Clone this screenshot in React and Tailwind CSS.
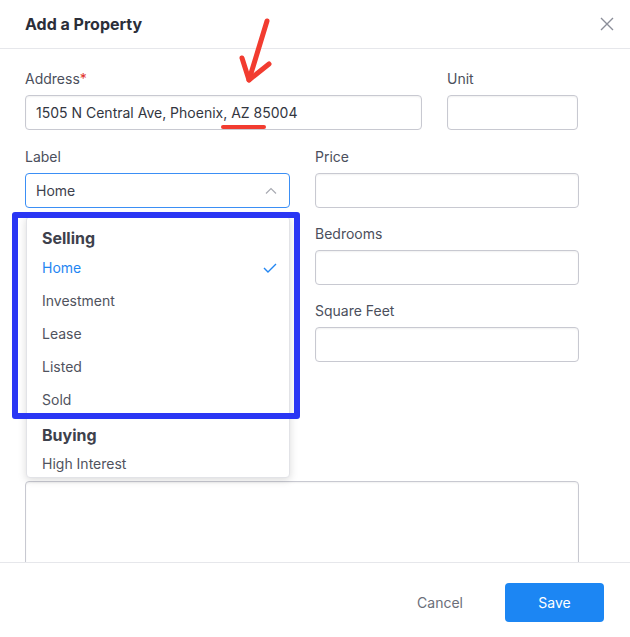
import { useState } from "react";

const font = { fontFamily: "Inter, 'Noto Sans', sans-serif" };

const inputCls =
  "block w-full h-[35px] rounded-[4px] border border-[#c8c9d1] bg-white px-[10px] text-[14px] text-[#33363f] shadow-[inset_0_1px_2px_rgba(0,0,0,0.06)] outline-none";

function Field({ label, required, children }) {
  return (
    <div>
      <div className="h-[20px] text-[14px] leading-[20px] text-[#4b4f5c]">
        {label}
        {required && <span className="text-[#e0342c]">*</span>}
      </div>
      <div className="mt-[6px]">{children}</div>
    </div>
  );
}

const selling = ["Home", "Investment", "Lease", "Listed", "Sold"];

function LabelSelect() {
  const [value] = useState("Home");
  return (
    <div className="relative">
      <div className="flex h-[35px] items-center justify-between rounded-[4px] border border-[#3b8ff5] bg-white pl-[10px] pr-[12px] text-[14px] text-[#3e424d]">
        <span>{value}</span>
        <svg width="12" height="8" viewBox="0 0 12 8" fill="none">
          <path d="M1 6.5 6 1.5l5 5" stroke="#a9abb3" strokeWidth="1.2" />
        </svg>
      </div>
      <div className="absolute left-[1px] top-[43px] z-10 h-[262px] w-[264px] overflow-hidden rounded-[4px] border border-[#e2e3e7] bg-white shadow-[0_2px_8px_rgba(0,0,0,0.15)]">
        <div className="h-[34px] pl-[15px] pt-[10px] text-[16px] font-bold leading-[22px] text-[#3e414c]">
          Selling
        </div>
        {selling.map((item) => (
          <div
            key={item}
            className={
              "flex h-[33px] items-center justify-between pl-[15px] pr-[12px] text-[14px] " +
              (item === value ? "text-[#1f86f2]" : "text-[#50535e]")
            }
          >
            <span>{item}</span>
            {item === value && (
              <svg width="14" height="10" viewBox="0 0 14 10" fill="none">
                <path d="M1 5l4 4 8-8" stroke="#2386f2" strokeWidth="1.4" />
              </svg>
            )}
          </div>
        ))}
        <div className="pl-[15px] pt-[8px] text-[16px] font-bold leading-[22px] text-[#3e414c]">
          Buying
        </div>
        <div className="flex h-[34px] items-center pl-[15px] text-[14px] text-[#50535e]">
          High Interest
        </div>
      </div>
    </div>
  );
}

export default function App() {
  return (
    <div className="relative flex h-[637px] w-[630px] flex-col overflow-hidden bg-white" style={font}>
      <div className="flex h-[49px] shrink-0 items-center justify-between border-b border-[#e6e7eb] pl-[25px] pr-[16px]">
        <div className="text-[16px] font-bold text-[#2b2e39]">Add a Property</div>
        <svg width="14" height="14" viewBox="0 0 14 14" fill="none">
          <path d="M1 1l12 12M13 1 1 13" stroke="#8b8e99" strokeWidth="1.4" />
        </svg>
      </div>

      <div className="flex-1 overflow-hidden px-[25px] pt-[20px]">
        <div className="grid grid-cols-[397px_131px] gap-x-[25px]">
          <Field label="Address" required>
            <input className={inputCls} defaultValue="1505 N Central Ave, Phoenix, AZ 85004" />
          </Field>
          <Field label="Unit">
            <input className={inputCls} />
          </Field>
        </div>

        <div className="mt-[17px] grid grid-cols-[265px_264px] gap-x-[25px] gap-y-[16px]">
          <Field label="Label">
            <LabelSelect />
          </Field>
          <Field label="Price">
            <input className={inputCls} />
          </Field>
          <div />
          <Field label="Bedrooms">
            <input className={inputCls} />
          </Field>
          <div />
          <Field label="Square Feet">
            <input className={inputCls} />
          </Field>
        </div>

        <textarea className="mt-[119px] block h-[120px] w-[554px] resize-none rounded-[4px] border border-[#c8c9d1] shadow-[inset_0_1px_2px_rgba(0,0,0,0.06)] outline-none" />
      </div>

      <div className="flex h-[75px] shrink-0 items-center justify-end gap-[42px] border-t border-[#e6e7eb] pr-[26px] pt-[4px]">
        <button className="text-[14px] text-[#6b6e79]">Cancel</button>
        <button className="h-[39px] w-[99px] rounded-[4px] bg-[#1c86f3] text-[14px] text-white">Save</button>
      </div>

      {/* annotations */}
      <div className="pointer-events-none absolute left-[12px] top-[212px] z-20 h-[207px] w-[288px] rounded-[3px] border-[6px] border-[#2a36f4]" />
      <svg className="pointer-events-none absolute left-0 top-0 z-20" width="630" height="140">
        <g stroke="#f23c30" strokeWidth="5" strokeLinecap="round" strokeLinejoin="round" fill="none">
          <path d="M267 21 249 80" />
          <path d="M242 58 249 80 269 64" />
        </g>
        <path d="M223 127h41" stroke="#f23c30" strokeWidth="4" strokeLinecap="round" />
      </svg>
    </div>
  );
}
